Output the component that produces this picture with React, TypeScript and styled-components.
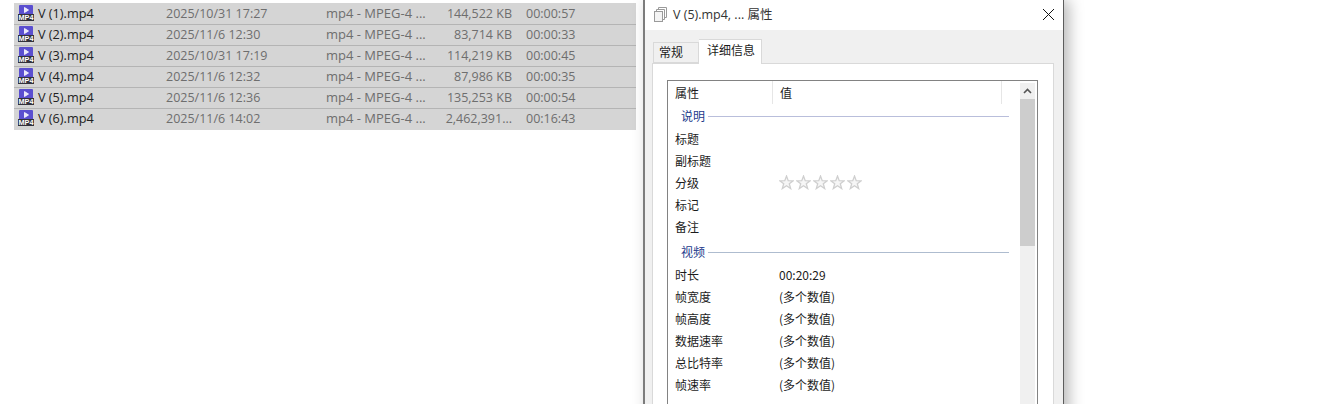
import React from 'react';
import styled, { createGlobalStyle } from 'styled-components';

const GlobalStyle = createGlobalStyle`
  html, body {
    margin: 0;
    padding: 0;
    background: #fff;
    overflow: hidden;
  }
`;

const Page = styled.div`
  display: flex;
  align-items: flex-start;
  width: 1324px;
  height: 404px;
  overflow: hidden;
  background: #fff;
  font-family: "Open Sans", "Noto Sans CJK SC", sans-serif;
`;

const FileList = styled.div`
  width: 622px;
  margin: 3px 0 0 14px;
  padding-bottom: 1px;
  background: #d5d5d5;
`;

const FileRow = styled.div`
  display: grid;
  grid-template-columns: 148px 160px 100px 86px 14px auto;
  align-items: center;
  height: 21px;
  box-sizing: border-box;
  padding: 0 0 2px 4px;
  border-top: 1px solid transparent;
  font-size: 12.5px;
  color: #6e6e6e;
  white-space: nowrap;

  & + & {
    border-top-color: #b4b4b4;
  }
`;

const FileName = styled.div`
  display: flex;
  align-items: center;
  gap: 4px;
  color: #222;
  font-size: 12.7px;
`;

const FileType = styled.div`
  font-size: 13px;
`;

const FileSize = styled.div`
  text-align: right;
`;

const Dialog = styled.div`
  flex: none;
  width: 421px;
  height: 460px;
  margin-left: 7px;
  box-sizing: border-box;
  border-left: 2px solid #7c7c7c;
  border-right: 1px solid #5c5c5c;
  background: #f0f0f0;
  box-shadow: 5px 0 14px rgba(0, 0, 0, 0.28);
  font-family: "Noto Sans CJK SC", "Open Sans", sans-serif;
  font-size: 12px;
  color: #1c1c1c;
`;

const TitleBar = styled.div`
  display: flex;
  align-items: center;
  box-sizing: border-box;
  height: 30px;
  padding: 0 8px 2px 8px;
  background: #fff;
  gap: 5px;
  color: #333;
`;

const TitleText = styled.div`
  flex: 1;
  padding-bottom: 2px;
  font-family: "Open Sans", "Noto Sans CJK SC", sans-serif;
  font-size: 12.5px;
`;

const TabRow = styled.div`
  display: flex;
  align-items: flex-end;
  height: 33px;
  padding-left: 8px;
`;

const Tab = styled.div<{ $active?: boolean }>`
  display: flex;
  align-items: center;
  box-sizing: border-box;
  height: ${({ $active }) => ($active ? '25px' : '21px')};
  width: ${({ $active }) => ($active ? '63px' : '46px')};
  padding: ${({ $active }) => ($active ? '0 0 6px 8px' : '0 0 2px 5px')};
  margin-bottom: ${({ $active }) => ($active ? '-1px' : '0')};
  border: 1px solid #d9d9d9;
  border-bottom: ${({ $active }) => ($active ? 'none' : '1px solid #d9d9d9')};
  border-left: ${({ $active }) => ($active ? 'none' : '1px solid #d9d9d9')};
  background: ${({ $active }) => ($active ? '#fff' : '#f0f0f0')};
  position: relative;
  z-index: ${({ $active }) => ($active ? 1 : 0)};
`;

const TabPanel = styled.div`
  width: 402px;
  height: 380px;
  margin-left: 7px;
  box-sizing: border-box;
  padding: 16px 0 0 14px;
  border: 1px solid #d9d9d9;
  background: #fff;
`;

const ListBox = styled.div`
  display: flex;
  width: 371px;
  height: 340px;
  box-sizing: border-box;
  border: 1px solid #828282;
`;

const ListContent = styled.div`
  flex: 1;
  min-width: 0;
`;

const HeaderRow = styled.div`
  display: grid;
  grid-template-columns: 105px 229px;
  height: 23px;
`;

const HeaderCell = styled.div`
  display: flex;
  align-items: center;
  padding-left: 7px;
  border-right: 1px solid #e6e6e6;
`;

const GroupRow = styled.div<{ $height: number; $top: number; $lineColor: string }>`
  display: flex;
  align-items: center;
  box-sizing: border-box;
  height: ${({ $height }) => $height}px;
  padding: ${({ $top }) => $top}px 11px 0 13px;
  gap: 3px;
  color: #1c3a8c;

  &::after {
    content: '';
    flex: 1;
    height: 1px;
    background: ${({ $lineColor }) => $lineColor};
  }
`;

const GroupLabel = styled.span`
  padding-bottom: 2px;
`;

const PropRow = styled.div`
  display: grid;
  grid-template-columns: 105px 1fr;
  align-items: center;
  box-sizing: border-box;
  height: 22px;
  padding: 0 0 2px 7px;
`;

const Stars = styled.div`
  display: flex;
  gap: 2px;
  margin-left: -1px;
  padding-top: 1px;
`;

const PropValue = styled.div`
  margin-left: -1px;
`;

const ScrollBar = styled.div`
  flex: none;
  display: flex;
  flex-direction: column;
  width: 15px;
  margin: 2px 2px 0 0;
  background: #f0f0f0;
`;

const ScrollUp = styled.div`
  display: flex;
  align-items: center;
  justify-content: center;
  height: 16px;
`;

const ScrollThumb = styled.div`
  height: 147px;
  background: #cdcdcd;
`;

const CloseButton = styled.div`
  display: flex;
  align-items: center;
  justify-content: center;
  width: 14px;
  height: 14px;
`;

const files = [
  ['V (1).mp4', '2025/10/31 17:27', '144,522 KB', '00:00:57'],
  ['V (2).mp4', '2025/11/6 12:30', '83,714 KB', '00:00:33'],
  ['V (3).mp4', '2025/10/31 17:19', '114,219 KB', '00:00:45'],
  ['V (4).mp4', '2025/11/6 12:32', '87,986 KB', '00:00:35'],
  ['V (5).mp4', '2025/11/6 12:36', '135,253 KB', '00:00:54'],
  ['V (6).mp4', '2025/11/6 14:02', '2,462,391...', '00:16:43'],
];

const Mp4Icon = () => (
  <svg width="16" height="16" viewBox="0 0 16 16">
    <rect x="1" y="0" width="14" height="15" rx="1" fill="#5b4fd0" />
    <path d="M6.5 2.5 L10.5 5 L6.5 7.5 Z" fill="#e8e6fb" stroke="#fff" strokeWidth="0.8" />
    <rect x="0" y="9" width="16" height="7" fill="#33323c" />
    <text x="0.5" y="15" textLength="15" lengthAdjust="spacingAndGlyphs" fontSize="7" fontWeight="700" fontFamily="Liberation Sans, sans-serif" fill="#fff">MP4</text>
  </svg>
);

const PagesIcon = () => (
  <svg width="15" height="16" viewBox="0 0 15 16" fill="none" stroke="#9a9a9a" strokeWidth="1">
    <path d="M5.5 3.5 V1.5 H13.5 V11.5 H11.5" />
    <path d="M3.5 5.5 V3.5 H11.5 V13.5 H9.5" fill="#fff" />
    <rect x="1.5" y="5.5" width="8" height="10" fill="#f4f4f4" />
  </svg>
);

const Star = () => (
  <svg width="15" height="15" viewBox="0 0 14 14">
    <path
      d="M7 1 L8.6 5.3 L13.2 5.4 L9.6 8.2 L10.9 12.7 L7 10.1 L3.1 12.7 L4.4 8.2 L0.8 5.4 L5.4 5.3 Z"
      fill="#f6f6f6"
      stroke="#cfcfcf"
      strokeWidth="1.2"
    />
  </svg>
);

const descriptionProps = ['标题', '副标题', '分级', '标记', '备注'];
const videoProps = [
  ['时长', '00:20:29'],
  ['帧宽度', '(多个数值)'],
  ['帧高度', '(多个数值)'],
  ['数据速率', '(多个数值)'],
  ['总比特率', '(多个数值)'],
  ['帧速率', '(多个数值)'],
];

const App: React.FC = () => (
  <Page>
    <GlobalStyle />
    <FileList>
      {files.map(([name, date, size, duration]) => (
        <FileRow key={name}>
          <FileName>
            <Mp4Icon />
            {name}
          </FileName>
          <div>{date}</div>
          <FileType>mp4 - MPEG-4 ...</FileType>
          <FileSize>{size}</FileSize>
          <div />
          <div>{duration}</div>
        </FileRow>
      ))}
    </FileList>

    <Dialog>
      <TitleBar>
        <PagesIcon />
        <TitleText>V (5).mp4, ... 属性</TitleText>
        <CloseButton>
          <svg width="13" height="13" viewBox="0 0 13 13" stroke="#111" strokeWidth="1">
            <path d="M1 1 L12 12 M12 1 L1 12" />
          </svg>
        </CloseButton>
      </TitleBar>

      <TabRow>
        <Tab>常规</Tab>
        <Tab $active>详细信息</Tab>
      </TabRow>

      <TabPanel>
        <ListBox>
          <ListContent>
            <HeaderRow>
              <HeaderCell>属性</HeaderCell>
              <HeaderCell>值</HeaderCell>
            </HeaderRow>
            <GroupRow $height={24} $top={0} $lineColor="#b9bedb">
              <GroupLabel>说明</GroupLabel>
            </GroupRow>
            {descriptionProps.map((label) => (
              <PropRow key={label}>
                <div>{label}</div>
                {label === '分级' && (
                  <Stars>
                    {[0, 1, 2, 3, 4].map((i) => (
                      <Star key={i} />
                    ))}
                  </Stars>
                )}
              </PropRow>
            ))}
            <GroupRow $height={26} $top={2} $lineColor="#aebccf">
              <GroupLabel>视频</GroupLabel>
            </GroupRow>
            {videoProps.map(([label, value]) => (
              <PropRow key={label}>
                <div>{label}</div>
                <PropValue>{value}</PropValue>
              </PropRow>
            ))}
          </ListContent>
          <ScrollBar>
            <ScrollUp>
              <svg width="9" height="6" viewBox="0 0 9 6" fill="none" stroke="#555" strokeWidth="1.6">
                <path d="M1 5 L4.5 1.5 L8 5" />
              </svg>
            </ScrollUp>
            <ScrollThumb />
          </ScrollBar>
        </ListBox>
      </TabPanel>
    </Dialog>
  </Page>
);

export default App;
